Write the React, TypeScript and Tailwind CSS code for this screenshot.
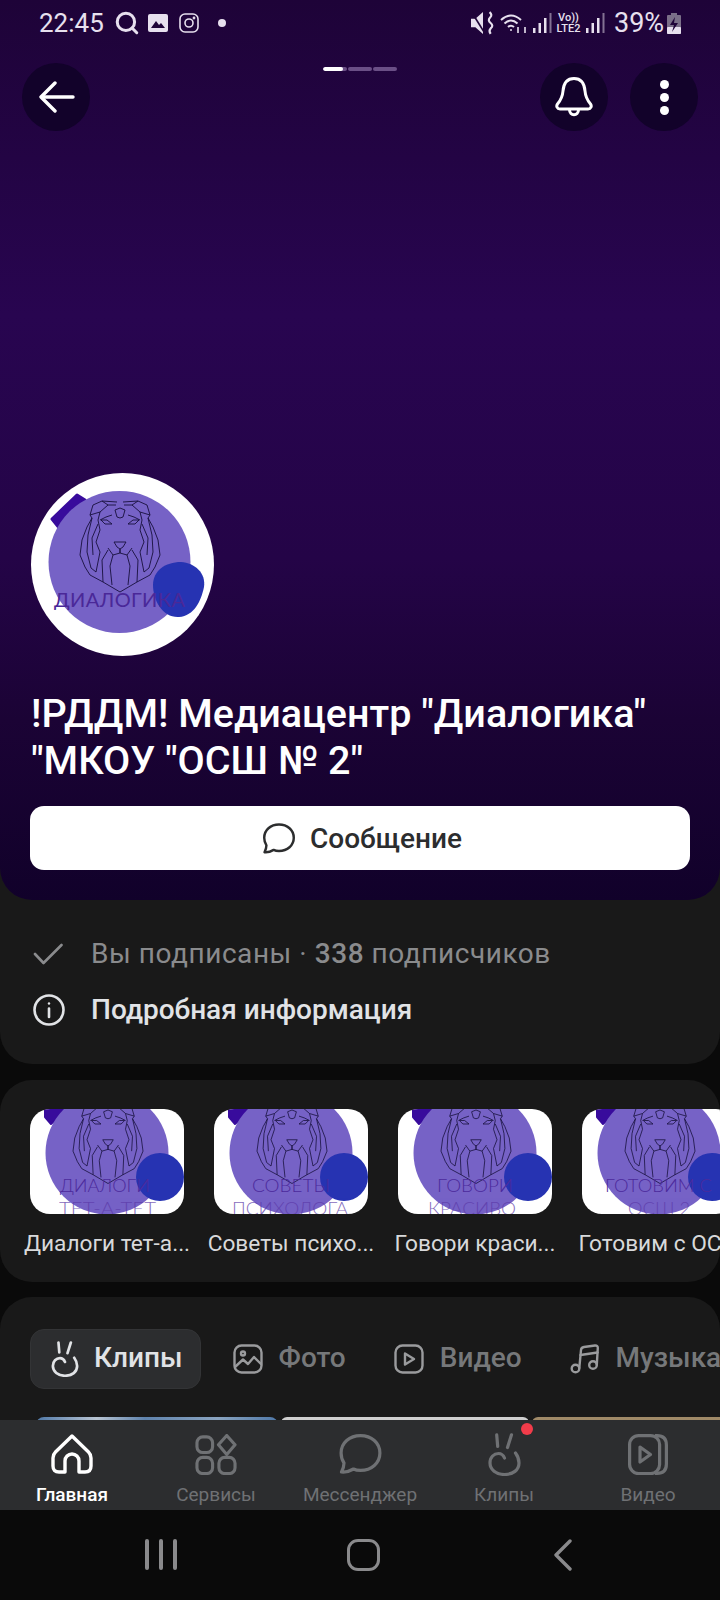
import React from 'react';
import { Search } from 'lucide-react';

const LionHalf = () => (
  <g>
    <path d="M3 2 L18 1 L27 5 L30 15 L28 18 L33 27 L38 40 L40 55 L35 67 L30 75 L17 82 L0 92" />
    <path d="M18 1 L12 5 L4 5" />
    <path d="M0 8 L5 10 L3 17 L0 18" />
    <path d="M12 5 L20 12 L30 15" />
    <path d="M20 12 L22 20 L20 30 L24 42 L20 52" />
    <path d="M8 24 L13 20 L19 20 L15 24 Z" />
    <path d="M0 42 L6 42 L3 47 L0 49 L0 53 L7 55 L12 48" />
    <path d="M28 18 L32 35 L33 52 L29 68 L24 72 L20 52" />
    <path d="M7 55 L10 66 L8 85" />
    <path d="M12 50 L18 60 L17 82" />
    <path d="M22 24 L28 38 L27 55" />
    <path d="M8 15 L14 17 L20 20" />
  </g>
);

const Lion = ({ x, y, scale }: { x: number; y: number; scale: number }) => (
  <g transform={`translate(${x} ${y}) scale(${scale})`} fill="none" stroke="#17103c" strokeWidth="0.9" strokeLinejoin="round">
    <LionHalf />
    <g transform="scale(-1 1)">
      <LionHalf />
    </g>
  </g>
);

const Avatar = () => (
  <svg viewBox="0 0 183 183" className="w-[183px] h-[183px] block">
    <circle cx="91.5" cy="91.5" r="91.5" fill="#ffffff" />
    <path d="M21 46 L46 22 L54 27 L29 56 Z" fill="#380b9c" stroke="#380b9c" strokeWidth="3" strokeLinejoin="round" />
    <circle cx="88.5" cy="89" r="71" fill="#7662c6" />
    <Lion x={89} y={27} scale={1} />
    <path d="M122 112 C122 98 134 89 150 89 C164 90 175 100 173 114 C170 128 163 143 148 144 C132 145 122 128 122 112 Z" fill="#2633b2" />
    <text x="23" y="134" textLength="131" lengthAdjust="spacing" fontFamily="Lato, sans-serif" fontWeight="400" fontSize="20" fill="#4a2898">ДИАЛОГИКА</text>
  </svg>
);

type Line = { t: string; x: number; w: number };

const Thumb = ({ a, b }: { a: Line; b: Line }) => (
  <svg viewBox="0 0 154 105" className="w-[154px] h-[105px] block rounded-[20px] overflow-hidden bg-white">
    <path d="M15 -2 L15 8 L21 15 L40 -2 Z" fill="#380b9c" stroke="#380b9c" strokeWidth="2" strokeLinejoin="round" />
    <circle cx="77" cy="44" r="61.5" fill="#7662c6" />
    <Lion x={78} y={-6} scale={0.875} />
    <circle cx="130" cy="68" r="24" fill="#2633b2" />
    <text x={a.x} y="83" textLength={a.w} lengthAdjust="spacingAndGlyphs" fontFamily="Lato, sans-serif" fontWeight="300" fontSize="17" fill="#4c2a9c">{a.t}</text>
    <text x={b.x} y="106" textLength={b.w} lengthAdjust="spacingAndGlyphs" fontFamily="Lato, sans-serif" fontWeight="300" fontSize="17" fill="#5c3aa8" opacity="0.75">{b.t}</text>
  </svg>
);

const playlists = [
  { label: 'Диалоги тет-а...', a: { t: 'ДИАЛОГИ', x: 30, w: 90 }, b: { t: 'ТЕТ-А-ТЕТ', x: 29, w: 97 } },
  { label: 'Советы психо...', a: { t: 'СОВЕТЫ', x: 38, w: 78 }, b: { t: 'ПСИХОЛОГА', x: 18, w: 116 } },
  { label: 'Говори краси...', a: { t: 'ГОВОРИ', x: 39, w: 76 }, b: { t: 'КРАСИВО', x: 30, w: 88 } },
  { label: 'Готовим с ОС...', a: { t: 'ГОТОВИМ С', x: 23, w: 107 }, b: { t: 'ОСШ 2', x: 46, w: 62 } },
];

const ChatIcon = ({ className }: { className: string }) => (
  <svg viewBox="0 0 42 40" className={className} fill="none" stroke="currentColor" strokeWidth="3.2" strokeLinejoin="round">
    <path d="M21 1.6 C32 1.6 40.4 9 40.4 19 C40.4 29 32 36.4 21 36.4 C18.5 36.4 16 36 14 35 C10.5 37 6 38.5 2 38 C3.5 35 4.5 31.5 4.5 29 C2.5 26 1.6 22.5 1.6 19 C1.6 9 10 1.6 21 1.6 Z" />
  </svg>
);

const ClipIcon = ({ className }: { className: string }) => (
  <svg viewBox="0 0 33 43" className={className} fill="none" stroke="currentColor" strokeWidth="3.2" strokeLinecap="round" strokeLinejoin="round">
    <path d="M8.7 1.8 L9.7 13.5" />
    <path d="M23.5 1.8 L19.5 14.5" />
    <path d="M27.5 20 C30.5 24 31 28 31 30 C31 37 25 41.5 16.5 41.5 C8 41.5 2 36.5 2 30 C2 24 6 20.5 10.5 20.5 C13.5 20.5 15.5 22.5 16.5 25" />
  </svg>
);

const tabs = [
  {
    label: 'Фото',
    icon: (
      <svg viewBox="0 0 30 30" className="w-[30px] h-[30px]" fill="none" stroke="currentColor" strokeWidth="2.4" strokeLinecap="round" strokeLinejoin="round">
        <rect x="1.5" y="1.5" width="27" height="27" rx="7" />
        <circle cx="10" cy="9.5" r="2" />
        <path d="M2 23 L10 15.5 L15 20 L21 13 L28 20" />
      </svg>
    ),
  },
  {
    label: 'Видео',
    icon: (
      <svg viewBox="0 0 30 30" className="w-[30px] h-[30px]" fill="none" stroke="currentColor" strokeWidth="2.4" strokeLinejoin="round">
        <rect x="1.5" y="1.5" width="27" height="27" rx="7" />
        <path d="M11 9.5 L20 15 L11 20.5 Z" />
      </svg>
    ),
  },
  {
    label: 'Музыка',
    icon: (
      <svg viewBox="0 0 30 30" className="w-[30px] h-[30px]" fill="none" stroke="currentColor" strokeWidth="2.4" strokeLinecap="round" strokeLinejoin="round">
        <circle cx="5.5" cy="24.5" r="3.8" />
        <circle cx="23" cy="21" r="3.8" />
        <path d="M9.3 24 L11 6 Q11.2 3.5 14 3 L25 1.5 Q28 1.3 27.8 4 L26.8 20.5" />
        <path d="M10.5 11 L27.5 8.5" />
      </svg>
    ),
  },
];

const navItems = [
  {
    label: 'Главная',
    active: true,
    icon: (
      <svg viewBox="0 0 42 40" className="w-[42px] h-[40px]" fill="none" stroke="currentColor" strokeWidth="3.4" strokeLinejoin="round">
        <path d="M21 2 L37.5 18 Q40 20.5 40 24 V32 Q40 38 34 38 H28 V27 A7 7 0 0 0 14 27 V38 H8 Q2 38 2 32 V24 Q2 20.5 4.5 18 Z" />
      </svg>
    ),
  },
  {
    label: 'Сервисы',
    icon: (
      <svg viewBox="0 0 42 42" className="w-[42px] h-[41px]" fill="none" stroke="currentColor" strokeWidth="3.2" strokeLinejoin="round">
        <rect x="1.5" y="3" width="16" height="16" rx="6" />
        <rect x="1.5" y="24" width="16" height="16.5" rx="6" />
        <rect x="24" y="24" width="16.5" height="16.5" rx="6" />
        <path d="M32 1.5 L40.5 11 L32 21 L23.5 11 Z" />
      </svg>
    ),
  },
  {
    label: 'Мессенджер',
    icon: <ChatIcon className="w-[43px] h-[40px]" />,
  },
  {
    label: 'Клипы',
    icon: <ClipIcon className="w-[33px] h-[43px]" />,
    dot: true,
  },
  {
    label: 'Видео',
    icon: (
      <svg viewBox="0 0 40 41" className="w-[40px] h-[41px]" fill="none" stroke="currentColor" strokeWidth="3.2" strokeLinejoin="round">
        <rect x="1.6" y="1.6" width="30" height="38" rx="9" />
        <path d="M27 1.6 H29 Q38.4 1.6 38.4 11 V30 Q38.4 39.4 29 39.4 H27" />
        <path d="M12 13 L22.5 20.5 L12 28 Z" />
      </svg>
    ),
  },
];

const StatusLeft = () => (
  <div className="flex items-center">
    <span className="text-[26px] leading-[30px] w-[66px]">22:45</span>
    <Search size={26} strokeWidth={2.8} className="ml-[9px]" />
    <svg viewBox="0 0 20 18" className="w-[20px] h-[18px] ml-[8px]">
      <path d="M2 0 H18 Q20 0 20 2 V16 Q20 18 18 18 H2 Q0 18 0 16 V2 Q0 0 2 0 Z" fill="#e7e0ee" />
      <path d="M3 14 L8 7 L11 11 L13 9 L17 14 Z" fill="#1f0438" />
    </svg>
    <svg viewBox="0 0 20 20" className="w-[20px] h-[20px] ml-[11px]" fill="none" stroke="currentColor" strokeWidth="1.6">
      <rect x="1" y="1" width="18" height="18" rx="5" />
      <circle cx="10" cy="10" r="4" />
      <circle cx="15" cy="5" r="0.6" />
    </svg>
    <span className="w-[8px] h-[8px] rounded-full bg-[#e7e0ee] ml-[19px]" />
  </div>
);

const Bars = () => (
  <svg viewBox="0 0 19 20" className="w-[19px] h-[20px]" fill="#e7e0ee">
    <rect x="0" y="15" width="2.5" height="5" />
    <rect x="5.5" y="10" width="2.5" height="10" />
    <rect x="11" y="5" width="2.5" height="15" />
    <rect x="16.5" y="0" width="2" height="20" opacity="0.5" />
  </svg>
);

const StatusRight = () => (
  <div className="flex items-center">
    <svg viewBox="0 0 22 22" className="w-[24px] h-[24px]" fill="#e7e0ee">
      <path d="M0 7 H4 L11 1 V21 L4 15 H0 Z" />
      <path d="M0 0 L13 21" stroke="#1f0438" strokeWidth="1.6" />
      <path d="M17 1 Q20 3.5 17.5 6 Q15 8.5 18 11 Q21 13.5 18 16 Q16 18 18 21" fill="none" stroke="#e7e0ee" strokeWidth="2" />
    </svg>
    <svg viewBox="0 0 28 22" className="w-[28px] h-[22px] ml-[5px]" fill="none" stroke="#e7e0ee" strokeWidth="2">
      <path d="M1 8 Q11 -1 21 8" />
      <path d="M4.5 11.5 Q11 5.5 17.5 11.5" />
      <path d="M8 15 Q11 12.5 14 15" />
      <circle cx="11" cy="18" r="1" fill="#e7e0ee" stroke="none" />
      <path d="M18 15 V21 M25 21 V15" strokeWidth="1.6" />
    </svg>
    <div className="ml-[5px]"><Bars /></div>
    <div className="ml-[3px] w-[27px] text-[11px] leading-[11px] text-center font-medium">
      <div>Vo))</div>
      <div>LTE2</div>
    </div>
    <div className="ml-[4px]"><Bars /></div>
    <span className="text-[27px] leading-[30px] ml-[9px] w-[49px]">39%</span>
    <svg viewBox="0 0 14 21" className="w-[14px] h-[21px] ml-[4px]">
      <rect x="4" y="0" width="6" height="3" fill="#7a6f88" />
      <rect x="0" y="2" width="14" height="19" rx="1" fill="#7a6f88" />
      <rect x="0" y="14" width="14" height="7" rx="1" fill="#e7e0ee" />
      <path d="M8 4 L3 12 H7 L5 19 L11 10 H7 Z" fill="#1f0438" />
    </svg>
  </div>
);

const App = () => {
  return (
    <div className="w-[720px] h-[1600px] flex flex-col overflow-hidden bg-[#0a0a0a] font-[Roboto,sans-serif]">
      <div className="flex-1 min-h-0 overflow-hidden">
        <div className="bg-[#191919] rounded-b-[32px]">
          <div className="h-[900px] rounded-b-[32px] bg-[linear-gradient(180deg,#1e0338_0%,#280550_35%,#240447_62%,#1b0335_80%,#11012a_100%)] flex flex-col">
            <div className="h-[46px] pl-[39px] pr-[39px] flex items-center justify-between text-[#e7e0ee]">
              <StatusLeft />
              <StatusRight />
            </div>
            <div className="mt-[17px] px-[22px] grid grid-cols-[1fr_auto_1fr] items-start">
              <button className="w-[68px] h-[68px] rounded-full bg-[#12022a] flex items-center justify-center text-white pl-[1px]">
                <svg viewBox="0 0 36 32" className="w-[36px] h-[32px]" fill="none" stroke="currentColor" strokeWidth="3.4" strokeLinecap="round" strokeLinejoin="round">
                  <path d="M34 16 H3" />
                  <path d="M16 2 L2 16 L16 30" />
                </svg>
              </button>
              <div className="mt-[4px] flex gap-[1px]">
                <div className="w-[24px] h-[4px] rounded-full bg-[#6a4f86] overflow-hidden">
                  <div className="w-[20px] h-[4px] rounded-full bg-white" />
                </div>
                <div className="w-[24px] h-[4px] rounded-full bg-[#6a4f86]" />
                <div className="w-[24px] h-[4px] rounded-full bg-[#6a4f86]" />
              </div>
              <div className="flex justify-end gap-[22px]">
                <button className="w-[68px] h-[68px] rounded-full bg-[#12022a] flex items-center justify-center text-white">
                  <svg viewBox="0 0 38 40" className="w-[38px] h-[40px]" fill="none" stroke="currentColor" strokeWidth="3" strokeLinejoin="round">
                    <path d="M19 1.5 C27 1.5 29.5 8 30 14 C30.5 20 32 23 35.5 27 C37 29 36 32 33 32 H5 C2 32 1 29 2.5 27 C6 23 7.5 20 8 14 C8.5 8 11 1.5 19 1.5 Z" />
                    <path d="M14.5 32.5 C14.5 39.5 23.5 39.5 23.5 32.5" />
                  </svg>
                </button>
                <button className="w-[68px] h-[68px] rounded-full bg-[#12022a] flex flex-col items-center justify-center gap-[4px]">
                  <span className="w-[9px] h-[9px] rounded-full bg-white" />
                  <span className="w-[9px] h-[9px] rounded-full bg-white" />
                  <span className="w-[9px] h-[9px] rounded-full bg-white" />
                </button>
              </div>
            </div>
            <div className="mt-[342px] ml-[31px]">
              <Avatar />
            </div>
            <h1 className="mt-[34px] px-[31px] text-white text-[39.5px] leading-[47px] font-medium whitespace-nowrap">
              !РДДМ! Медиацентр "Диалогика"
              <br />
              "МКОУ "ОСШ № 2"
            </h1>
            <button className="mt-[22px] mx-[30px] h-[64px] rounded-[14px] bg-white flex items-center justify-center gap-[15px] pl-[5px] text-[#2c2d2e]">
              <ChatIcon className="w-[32px] h-[31px]" />
              <span className="text-[28px] font-medium pt-[2px]">Сообщение</span>
            </button>
          </div>
          <div className="pt-[34px] pb-[34px] px-[33px] flex flex-col gap-[16px]">
            <div className="h-[40px] flex items-center text-[#8a8b8d]">
              <svg viewBox="0 0 30 22" className="w-[30px] h-[22px]" fill="none" stroke="currentColor" strokeWidth="2.6" strokeLinecap="round" strokeLinejoin="round">
                <path d="M2 11 L10.5 20 L28.5 2" />
              </svg>
              <span className="ml-[28px] text-[28px] tracking-[0.55px]">
                Вы подписаны · <span className="font-medium">338</span> подписчиков
              </span>
            </div>
            <div className="h-[40px] flex items-center text-[#e1e3e6]">
              <svg viewBox="0 0 32 32" className="w-[32px] h-[32px]" fill="none" stroke="currentColor" strokeWidth="2.6" strokeLinecap="round">
                <circle cx="16" cy="16" r="14.5" />
                <path d="M16 14.5 V23" />
                <circle cx="16" cy="9.5" r="1.2" fill="currentColor" stroke="none" />
              </svg>
              <span className="ml-[26px] text-[28px] font-medium">Подробная информация</span>
            </div>
          </div>
        </div>

        <div className="mt-[16px] h-[202px] rounded-[32px] bg-[#191919] pt-[29px] pl-[21px] flex gap-[12px] overflow-hidden">
          {playlists.map((p) => (
            <div key={p.label} className="w-[172px] shrink-0 flex flex-col items-center">
              <Thumb a={p.a} b={p.b} />
              <div className="mt-[16px] w-[172px] flex justify-center text-[#d8d9db] text-[22.7px] leading-[28px] whitespace-nowrap">{p.label}</div>
            </div>
          ))}
        </div>

        <div className="mt-[15px] h-[300px] rounded-t-[32px] bg-[#191919] pt-[32px]">
          <div className="pl-[30px] flex gap-[12px] whitespace-nowrap">
            <div className="h-[60px] pl-[20px] pr-[17px] rounded-[14px] bg-[#2c2d2f] border border-[#333436] flex items-center gap-[15px] text-[#e1e3e6]">
              <ClipIcon className="w-[28px] h-[36px]" />
              <span className="text-[28px] font-medium pb-[2px]">Клипы</span>
            </div>
            {tabs.map((t) => (
              <div key={t.label} className="h-[60px] pl-[20px] pr-[16px] flex items-center gap-[16px] text-[#76787a]">
                <span className="text-[#9a9b9d]">{t.icon}</span>
                <span className="text-[28px] font-medium pb-[2px]">{t.label}</span>
              </div>
            ))}
          </div>
          <div className="mt-[28px] pl-[36px] flex gap-[3px]">
            <div className="w-[242px] h-[10px] shrink-0 rounded-t-[8px] bg-[linear-gradient(90deg,#4f78a8_0%,#b8c4d2_25%,#5f83ad_45%,#8aa4c0_75%,#4f78a8_100%)]" />
            <div className="w-[248px] h-[10px] shrink-0 rounded-t-[6px] bg-[#cfcfcf]" />
            <div className="w-[200px] h-[10px] shrink-0 rounded-t-[6px] bg-[#a08a68]" />
          </div>
        </div>
      </div>

      <nav className="h-[90px] bg-[#2c2d2f] grid grid-cols-5">
        {navItems.map((n) => (
          <div key={n.label} className={`relative flex flex-col items-center ${n.active ? 'text-white' : 'text-[#6f7174]'}`}>
            <div className="h-[44px] mt-[12px] flex items-center justify-center">{n.icon}</div>
            <span className={`text-[19px] leading-[24px] mt-[7px] ${n.active ? 'font-medium' : ''}`}>{n.label}</span>
            {n.dot && <span className="absolute left-[89px] top-[3px] w-[12px] h-[12px] rounded-full bg-[#f23c4a]" />}
          </div>
        ))}
      </nav>

      <div className="h-[90px] bg-[#0a0a0a] grid grid-cols-3 text-[#8a8a8c] pt-[29px] pl-[60px] pr-[54px]">
        <div className="flex justify-center gap-[10px]">
          <span className="w-[4px] h-[31px] rounded-full bg-current" />
          <span className="w-[4px] h-[31px] rounded-full bg-current" />
          <span className="w-[4px] h-[31px] rounded-full bg-current" />
        </div>
        <div className="flex justify-center">
          <span className="w-[33px] h-[32px] rounded-[11px] border-[3.5px] border-current" />
        </div>
        <div className="flex justify-center pr-[4px]">
          <svg viewBox="0 0 20 32" className="w-[20px] h-[32px]" fill="none" stroke="currentColor" strokeWidth="3.4" strokeLinecap="round" strokeLinejoin="round">
            <path d="M17 2 L3 16 L17 30" />
          </svg>
        </div>
      </div>
    </div>
  );
};

export default App;
